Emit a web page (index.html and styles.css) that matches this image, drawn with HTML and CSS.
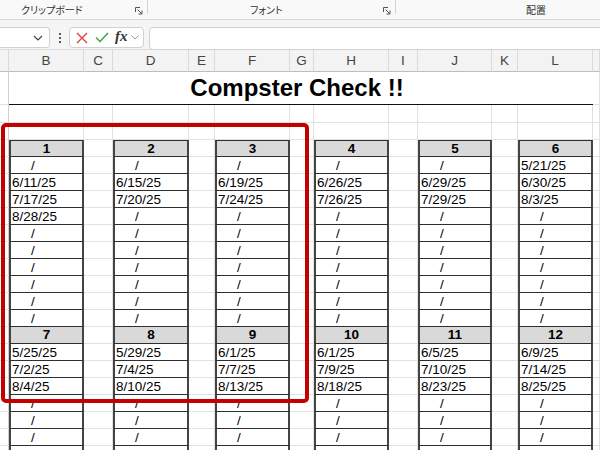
FILE: index.html
```html
<!DOCTYPE html>
<html lang="ja">
<head>
    <meta charset="UTF-8">
    <title>Compster Check</title>
    <link rel="stylesheet" href="styles.css">
</head>
<body>
    <div class="ribbon">
        <div class="group g-clip">
            <span class="label">クリップボード</span>
            <svg class="launcher" width="8" height="8" viewBox="0 0 8 8"><path d="M0.5 5V0.5H5M2.5 2.5L7 7M7 3.5V7H3.5" fill="none" stroke="#555" stroke-width="1"/></svg>
        </div>
        <div class="sep"></div>
        <div class="group g-font">
            <span class="label">フォント</span>
            <svg class="launcher" width="8" height="8" viewBox="0 0 8 8"><path d="M0.5 5V0.5H5M2.5 2.5L7 7M7 3.5V7H3.5" fill="none" stroke="#555" stroke-width="1"/></svg>
        </div>
        <div class="sep"></div>
        <div class="group g-align">
            <span class="label">配置</span>
        </div>
    </div>

    <div class="fbar">
        <div class="namebox">
            <svg width="10" height="6" viewBox="0 0 10 6"><path d="M1 1L5 5L9 1" fill="none" stroke="#444" stroke-width="1.2"/></svg>
        </div>
        <svg class="dots" width="4" height="12" viewBox="0 0 4 12"><circle cx="2" cy="2" r="1.1" fill="#333"/><circle cx="2" cy="6" r="1.1" fill="#333"/><circle cx="2" cy="10" r="1.1" fill="#333"/></svg>
        <div class="fnbox">
            <svg width="12" height="12" viewBox="0 0 12 12"><path d="M1 1L11 11M11 1L1 11" stroke="#e0393e" stroke-width="1.3"/></svg>
            <svg width="14" height="11" viewBox="0 0 14 11"><path d="M1 5.5L5 9.5L13 1" fill="none" stroke="#3f9d47" stroke-width="1.4"/></svg>
            <span class="fx">fx</span>
            <svg width="8" height="5" viewBox="0 0 8 5"><path d="M0.5 0.5L4 4L7.5 0.5" fill="none" stroke="#999" stroke-width="1"/></svg>
        </div>
        <div class="formula"></div>
    </div>

    <div id="sheet" class="sheet"></div>

    <div class="mark"></div>

    <script>
        const letters = ['', 'B', 'C', 'D', 'E', 'F', 'G', 'H', 'I', 'J', 'K', 'L', ''];

        const blocks = [
            {
                rows: 10,
                tables: [
                    { no: 1, dates: ['/', '6/11/25', '7/17/25', '8/28/25'] },
                    { no: 2, dates: ['/', '6/15/25', '7/20/25'] },
                    { no: 3, dates: ['/', '6/19/25', '7/24/25'] },
                    { no: 4, dates: ['/', '6/26/25', '7/26/25'] },
                    { no: 5, dates: ['/', '6/29/25', '7/29/25'] },
                    { no: 6, dates: ['5/21/25', '6/30/25', '8/3/25'] }
                ]
            },
            {
                rows: 7,
                tables: [
                    { no: 7, dates: ['5/25/25', '7/2/25', '8/4/25'] },
                    { no: 8, dates: ['5/29/25', '7/4/25', '8/10/25'] },
                    { no: 9, dates: ['6/1/25', '7/7/25', '8/13/25'] },
                    { no: 10, dates: ['6/1/25', '7/9/25', '8/18/25'] },
                    { no: 11, dates: ['6/5/25', '7/10/25', '8/23/25'] },
                    { no: 12, dates: ['6/9/25', '7/14/25', '8/25/25'] }
                ]
            }
        ];

        function plainRow() {
            let html = '<div class="c rh"></div>';
            for (let j = 1; j < 13; j++) html += '<div class="c"></div>';
            return html;
        }

        function buildSheet() {
            let html = '';

            // column letters
            letters.forEach((l, i) => {
                html += `<div class="colhead${i === 0 ? ' corner' : ''}">${l}</div>`;
            });

            // title row (merged B:L)
            html += '<div class="c rh"></div>';
            html += '<div class="title">Compster Check !!</div>';
            html += '<div class="c"></div>';

            html += plainRow();
            html += plainRow();

            blocks.forEach((block, b) => {
                // header row
                html += '<div class="c rh"></div>';
                for (let j = 1; j < 12; j++) {
                    if (j % 2 === 1) {
                        const t = block.tables[(j - 1) / 2];
                        html += `<div class="c t h${b === 0 ? ' first' : ''}">${t.no}</div>`;
                    } else {
                        html += '<div class="c"></div>';
                    }
                }
                html += '<div class="c"></div>';

                for (let r = 0; r < block.rows; r++) {
                    html += '<div class="c rh"></div>';
                    for (let j = 1; j < 12; j++) {
                        if (j % 2 === 1) {
                            const t = block.tables[(j - 1) / 2];
                            const v = t.dates[r] || '/';
                            html += `<div class="c t ${v === '/' ? 's' : 'd'}">${v}</div>`;
                        } else {
                            html += '<div class="c"></div>';
                        }
                    }
                    html += '<div class="c"></div>';
                }
            });

            document.getElementById('sheet').innerHTML = html;
        }

        buildSheet();
    </script>
</body>
</html>
```

FILE: styles.css
```css
body {
    margin: 0;
    width: 600px;
    height: 450px;
    overflow: hidden;
    position: relative;
    background: #fff;
    font-family: "Liberation Sans", Arial, sans-serif;
}
.ribbon {
    height: 19px;
    display: flex;
    background: #f9f9f9;
    border-bottom: 1px solid #d8d8d8;
    font-family: "Noto Sans CJK JP", sans-serif;
    font-feature-settings: "palt";
    font-size: 10px;
    color: #333;
}
.group {
    display: flex;
    align-items: center;
    justify-content: space-between;
    height: 19px;
    box-sizing: border-box;
}
.g-clip {
    width: 147px;
    padding: 0 4px 0 21px;
}
.g-font {
    width: 247px;
    padding: 0 4px 0 102px;
}
.g-align {
    flex: 1;
    padding-left: 130px;
}
.launcher {
    margin-top: 3px;
}
.sep {
    width: 1px;
    height: 14px;
    background: #d4d4d4;
}
.fbar {
    height: 30px;
    box-sizing: border-box;
    padding-top: 7px;
    display: flex;
    align-items: flex-start;
    background: #f5f5f5;
    border-bottom: 1px solid #dcdcdc;
}
.namebox {
    width: 50px;
    height: 21px;
    box-sizing: border-box;
    background: #fff;
    border: 1px solid #d1d1d1;
    border-left: none;
    border-radius: 0 4px 4px 0;
    display: flex;
    align-items: center;
    justify-content: flex-end;
    padding-right: 6px;
}
.dots {
    margin: 5px 7px 0 8px;
}
.fnbox {
    width: 75px;
    height: 21px;
    box-sizing: border-box;
    background: #fff;
    border: 1px solid #d1d1d1;
    border-radius: 4px;
    display: flex;
    align-items: center;
    gap: 7px;
    padding-left: 6px;
}
.fx {
    font-family: "Liberation Serif", serif;
    font-style: italic;
    font-weight: bold;
    font-size: 15px;
    color: #333;
    margin: -2px -4px 0 -1px;
}
.formula {
    flex: 1;
    height: 21px;
    margin: 0 -10px 0 5px;
    background: #fff;
    border: 1px solid #d1d1d1;
    border-radius: 4px;
}
.sheet {
    display: grid;
    grid-template-columns: 9px 75px 29px 76px 26px 75px 24px 75px 29px 74px 26px 75px 1fr;
    grid-template-rows: 22px 33px 18px 17px;
    grid-auto-rows: 17px;
}
.colhead {
    background: #f3f3f3;
    border-right: 1px solid #dadada;
    border-bottom: 1px solid #bdbdbd;
    box-sizing: border-box;
    text-align: center;
    color: #444;
    font-size: 13.5px;
    line-height: 22px;
}
.c {
    box-sizing: border-box;
    border-right: 1px solid #e1e1e1;
    border-bottom: 1px solid #e1e1e1;
    font-size: 13.5px;
    line-height: 18px;
    white-space: nowrap;
    overflow: hidden;
    color: #000;
}
.rh {
    border-right-color: #d0d0d0;
}
.title {
    grid-column: 2 / 13;
    border-bottom: 1px solid #111;
    display: flex;
    align-items: center;
    justify-content: center;
    padding-right: 8px;
    font-size: 24px;
    font-weight: bold;
}
.t {
    border-left: 2px solid #444;
    border-right: 2px solid #444;
    border-bottom: 1px solid #2e2e2e;
}
.t.first {
    border-top: 1px solid #2e2e2e;
}
.t.h {
    background: #d9d9d9;
    font-weight: bold;
    text-align: center;
    line-height: 16px;
}
.t.d {
    padding-left: 1px;
}
.t.s {
    padding-left: 20px;
}
.mark {
    position: absolute;
    left: 1px;
    top: 123px;
    width: 308px;
    height: 280px;
    box-sizing: border-box;
    border: 4px solid #c60000;
    border-radius: 5px;
}
```
